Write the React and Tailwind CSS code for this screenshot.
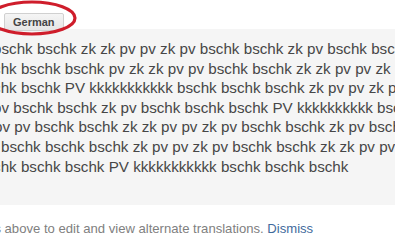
import React from 'react';

const lines = [
  { ml: 'ml-[-7px]', text: 'bschk bschk zk zk pv pv zk pv bschk bschk zk pv bschk bschk' },
  { ml: 'ml-[-23px]', text: 'bschk bschk bschk pv zk zk pv pv bschk bschk zk zk pv pv zk' },
  { ml: 'ml-[-23px]', text: 'bschk bschk PV kkkkkkkkkkk bschk bschk bschk zk pv pv zk pv' },
  { ml: 'ml-[-7px]', text: 'pv bschk bschk zk pv bschk bschk bschk PV kkkkkkkkkk bschk' },
  { ml: 'ml-[-6px]', text: 'pv pv bschk bschk zk zk pv pv zk pv bschk bschk zk pv bschk' },
  { ml: 'ml-[1px]', text: 'bschk bschk bschk zk pv pv zk pv bschk bschk zk zk pv pv' },
  { ml: 'ml-[-23px]', text: 'bschk bschk bschk PV kkkkkkkkkkk bschk bschk bschk' },
];

export default function App() {
  return (
    <div className="w-[395px] h-[247px] overflow-hidden bg-white font-['Liberation_Sans',Arial,sans-serif] relative">
      {/* language button row */}
      <div className="h-[29px] pt-[9px] pl-[4px]">
        <button className="h-[18px] px-[8px] text-[11px] font-bold text-[#444] border border-[#d0d0d0] rounded-[2px] bg-gradient-to-b from-[#f5f5f5] to-[#e6e6e6] leading-[16px]">
          German
        </button>
      </div>

      {/* red marker ellipse */}
      <svg className="absolute left-0 top-0 pointer-events-none" width="90" height="40" viewBox="0 0 90 40">
        <ellipse cx="32" cy="18" rx="43" ry="16" fill="none" stroke="#cf1d2b" strokeWidth="3.2" />
      </svg>

      {/* translated text panel */}
      <div className="h-[176px] bg-[#f5f5f5] pt-[10px] overflow-hidden">
        {lines.map((l, i) => (
          <div
            key={i}
            className={`${l.ml} whitespace-nowrap text-[15.2px] leading-[19.6px] text-[#474747]`}
          >
            {l.text}
          </div>
        ))}
      </div>

      {/* hint row */}
      <div className="pt-[14px] ml-[-34px] whitespace-nowrap text-[13.1px] text-[#808080]">
        words above to edit and view alternate translations.{' '}
        <a className="text-[#3f6a9c] cursor-pointer">Dismiss</a>
      </div>
    </div>
  );
}
